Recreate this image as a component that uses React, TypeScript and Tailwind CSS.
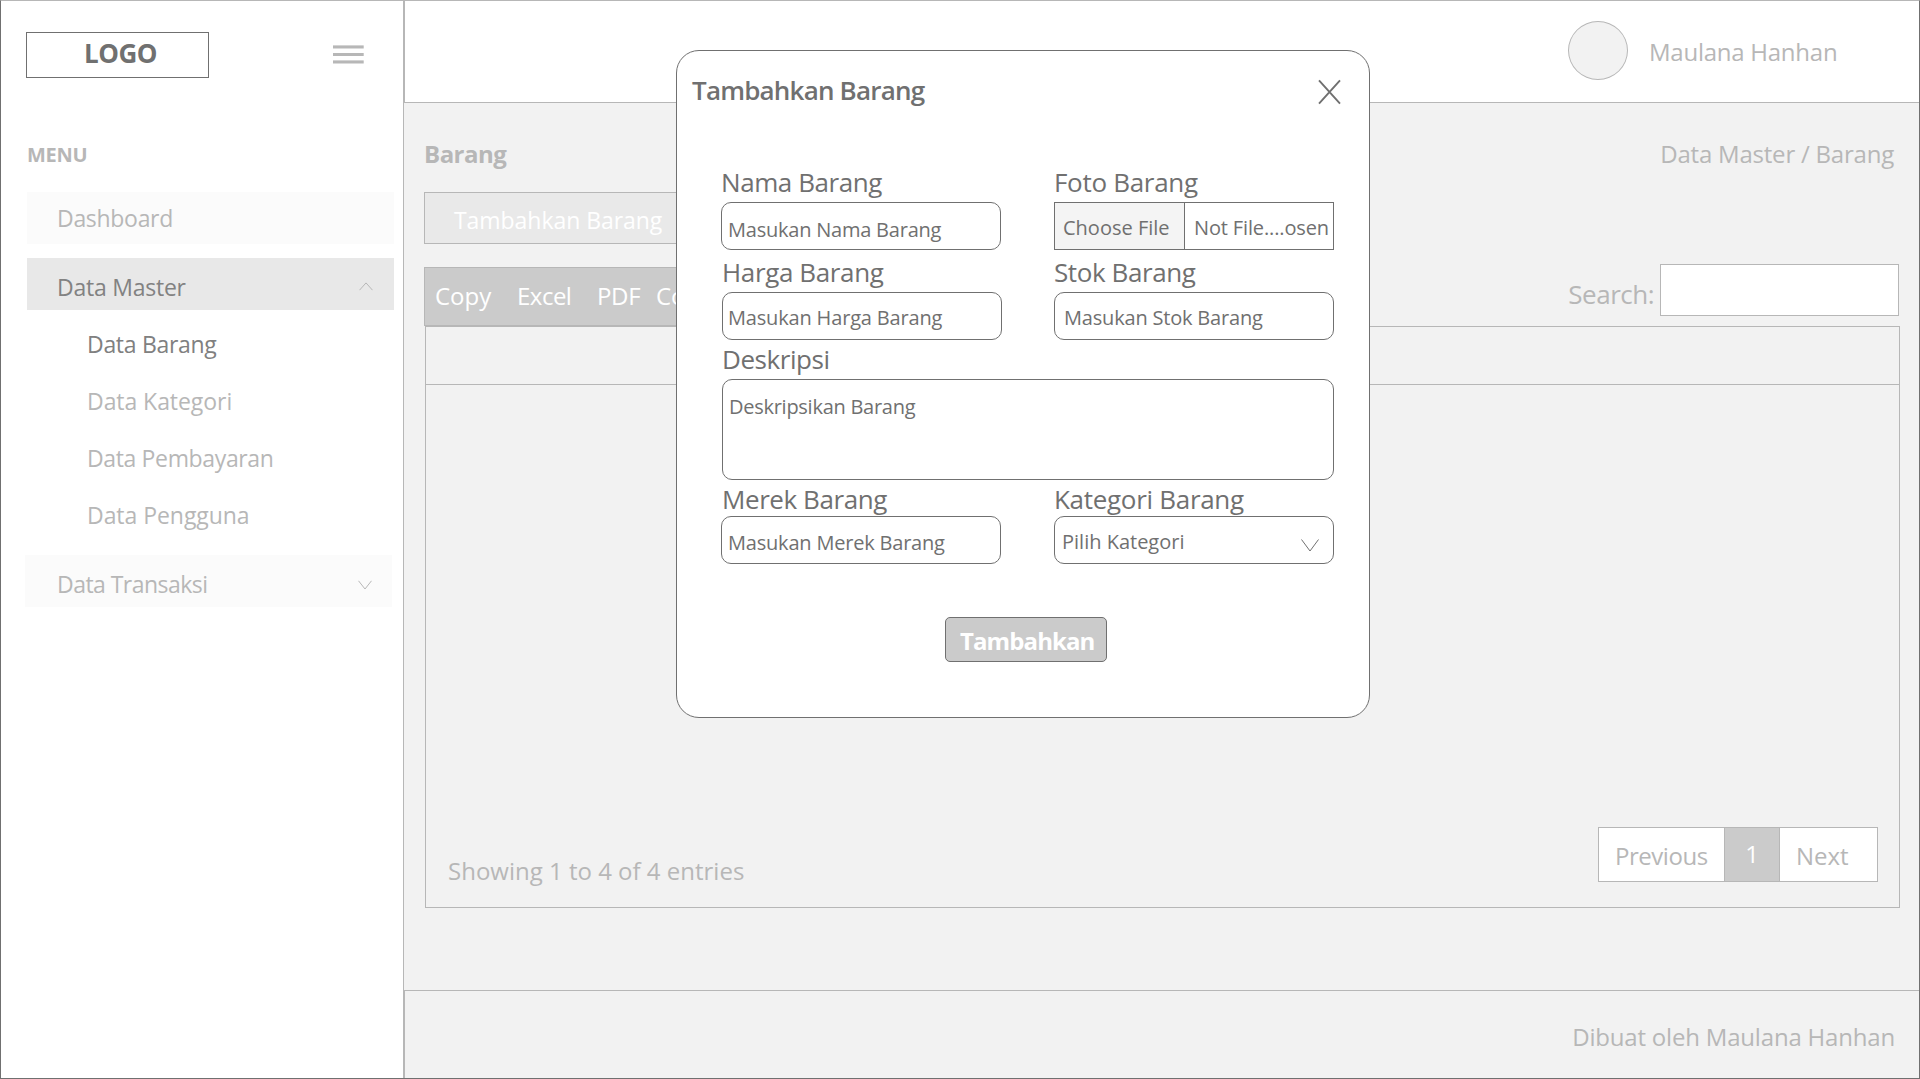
import React from "react";

function Chevron({ className, d, w, h, stroke }: { className?: string; d: string; w: number; h: number; stroke: string }) {
  return (
    <svg className={className} width={w} height={h} viewBox={`0 0 ${w} ${h}`} fill="none" stroke={stroke} strokeWidth="1">
      <path d={d} />
    </svg>
  );
}

function Sidebar() {
  return (
    <aside className="flex h-full w-[403px] shrink-0 flex-col border-r border-[#b7b7b7] bg-white text-[23px] leading-8 text-[#b7b7b7]">
      <div className="flex pt-[31px] pl-[25px]">
        <div className="h-[46px] w-[183px] border border-[#707070] pt-[2px] pl-[57px] text-[26px] leading-9 font-bold tracking-[-0.5px] text-[#707070]">LOGO</div>
        <svg className="mt-[12px] ml-[124px]" width="31" height="21" viewBox="0 0 31 21" fill="#b7b7b7">
          <rect y="1.4" width="30.7" height="3.1" />
          <rect y="9" width="30.7" height="3" />
          <rect y="16.4" width="30.7" height="3.1" />
        </svg>
      </div>
      <h2 className="mt-[63px] ml-[26px] text-[20px] leading-7 font-bold tracking-[-0.24px]">MENU</h2>
      <nav className="mt-[23px] flex flex-col">
        <div className="ml-[26px] h-[52px] w-[367px] bg-[#fbfbfb] pt-[10px] pl-[30px] tracking-[-0.3px]">Dashboard</div>
        <div className="mt-[14px] ml-[26px] flex h-[52px] w-[367px] justify-between bg-[#e8e8e8] pt-[13px] pr-[21px] pl-[30px] tracking-[-0.24px] text-[#828282]">
          <span>Data Master</span>
          <Chevron className="mt-[11px]" w={14} h={9} d="M.5 8.2 7 .9l6.5 7.3" stroke="#b7b7b7" />
        </div>
        <div className="mt-[18px] ml-[86px] flex flex-col gap-[25px]">
          <span className="tracking-[-0.3px] text-[#808080]">Data Barang</span>
          <span className="tracking-[-0.06px]">Data Kategori</span>
          <span className="tracking-[-0.36px]">Data Pembayaran</span>
          <span className="tracking-[-0.05px]">Data Pengguna</span>
        </div>
        <div className="mt-[24px] ml-[24px] flex h-[52px] w-[367px] justify-between bg-[#fbfbfb] pt-[13px] pr-[20px] pl-[32px]">
          <span className="tracking-[-0.54px]">Data Transaksi</span>
          <Chevron className="mt-[12px]" w={14} h={10} d="M.5 .8 7 9 13.5 .8" stroke="#b7b7b7" />
        </div>
      </nav>
    </aside>
  );
}

function Header() {
  return (
    <header className="flex h-[102px] border-b border-l border-[#b7b7b7] bg-white pt-[20px] pl-[1163px]">
      <div className="h-[59px] w-[60px] rounded-[50%] border border-[#b7b7b7] bg-[#f2f2f2]" />
      <span className="mt-[15px] ml-[21px] text-[24px] leading-8 tracking-[-0.25px]">Maulana Hanhan</span>
    </header>
  );
}

function DataTable() {
  return (
    <section className="ml-[21px] flex h-[582px] w-[1475px] flex-col border border-[#b7b7b7]">
      <div className="h-[58px] border-b border-[#b7b7b7]" />
      <div className="flex flex-1 items-end justify-between pr-[21px] pb-[25px] pl-[22px]">
        <span className="mb-[-5px] text-[24px] leading-8">Showing 1 to 4 of 4 entries</span>
        <div className="flex h-[55px] w-[280px] border border-[#b7b7b7] bg-white text-[24px] leading-8">
          <span className="w-[125px] pt-[12px] pl-[16px] tracking-[-0.46px]">Previous</span>
          <span className="w-[56px] border-x border-[#b7b7b7] bg-[#cbcbcb] pt-[10px] text-center text-white">1</span>
          <span className="pt-[12px] pl-[16px]">Next</span>
        </div>
      </div>
    </section>
  );
}

function Content() {
  return (
    <main className="flex h-[887px] flex-col text-[#b7b7b7]">
      <div className="flex justify-between pt-[35px] pr-[25px] pl-[20px] text-[24px] leading-8">
        <h1 className="font-bold tracking-[-0.5px]">Barang</h1>
        <span className="tracking-[-0.22px]">Data Master / Barang</span>
      </div>
      <div className="flex justify-between pr-[20px] pl-[20px]">
        <div className="mt-[22px]">
          <button className="block h-[52px] w-[264px] border border-[#b7b7b7] bg-[#e9e9e9] pt-[3px] pl-[29px] text-left text-[23px] leading-8 tracking-[-0.05px] text-white">Tambahkan Barang</button>
          <div className="mt-[23px] flex h-[59px] w-[450px] border border-[#b7b7b7] bg-[#cbcbcb] pt-[12px] pl-[10px] text-[24px] leading-8 text-white">
            <span className="w-[82px] shrink-0">Copy</span>
            <span className="w-[80px] shrink-0 tracking-[-0.5px]">Excel</span>
            <span className="w-[59px] shrink-0 tracking-[-0.33px]">PDF</span>
            <span className="shrink-0 whitespace-nowrap">Column</span>
          </div>
        </div>
        <label className="mt-[94px] flex">
          <span className="mt-[12px] mr-[6px] text-[26px] leading-9 tracking-[-0.5px]">Search:</span>
          <div className="h-[52px] w-[239px] border border-[#b7b7b7] bg-white" />
        </label>
      </div>
      <DataTable />
    </main>
  );
}

function Label({ children, className }: { children: React.ReactNode; className: string }) {
  return <span className={`block text-[26px] leading-9 ${className}`}>{children}</span>;
}

function Modal() {
  return (
    <div className="absolute top-[49px] left-[675px] flex h-[668px] w-[694px] flex-col rounded-[23px] border border-[#707070] bg-white text-[#707070]">
      <div className="flex justify-between pt-[21px] pr-[28px] pl-[15px]">
        <h2 className="text-[26px] leading-9 font-semibold tracking-[-0.8px]">Tambahkan Barang</h2>
        <svg className="mt-[7px]" width="23" height="26" viewBox="0 0 23 26" fill="none" stroke="#707070" strokeWidth="1.9">
          <path d="M1 1.3 22 24.7M22 1.3 1 24.7" />
        </svg>
      </div>
      <div className="mt-[56px] flex pl-[44px]">
        <div className="w-[333px]">
          <Label className="tracking-[-0.43px]">Nama Barang</Label>
          <div className="mt-[2px] h-[48px] w-[280px] rounded-[10px] border border-[#707070] pt-[13px] pl-[6px] text-[20px] leading-7 tracking-[-0.22px]">Masukan Nama Barang</div>
          <Label className="mt-[4px] ml-px tracking-[-0.37px]">Harga Barang</Label>
          <div className="mt-[2px] ml-px h-[48px] w-[280px] rounded-[10px] border border-[#707070] pt-[11px] pl-[5px] text-[20px] leading-7 tracking-[-0.17px]">Masukan Harga Barang</div>
        </div>
        <div>
          <Label className="tracking-[-0.3px]">Foto Barang</Label>
          <div className="mt-[2px] flex h-[48px] w-[280px] border border-[#707070] text-[20px] leading-7">
            <span className="w-[130px] border-r border-[#707070] bg-[#f4f4f4] pt-[11px] pl-[8px]">Choose File</span>
            <span className="pt-[11px] pl-[9px] tracking-[-0.14px]">Not File....osen</span>
          </div>
          <Label className="mt-[4px] tracking-[-0.41px]">Stok Barang</Label>
          <div className="mt-[2px] h-[48px] w-[280px] rounded-[10px] border border-[#707070] pt-[11px] pl-[9px] text-[20px] leading-7 tracking-[-0.19px]">Masukan Stok Barang</div>
        </div>
      </div>
      <Label className="mt-px ml-[45px] tracking-[-0.45px]">Deskripsi</Label>
      <div className="mt-[2px] ml-[45px] h-[101px] w-[612px] rounded-[10px] border border-[#707070] pt-[13px] pl-[6px] text-[20px] leading-7 tracking-[-0.27px]">Deskripsikan Barang</div>
      <div className="mt-px flex pl-[44px]">
        <div className="w-[333px]">
          <Label className="ml-px tracking-[-0.42px]">Merek Barang</Label>
          <div className="mt-[-1px] h-[48px] w-[280px] rounded-[10px] border border-[#707070] pt-[12px] pl-[6px] text-[20px] leading-7 tracking-[-0.2px]">Masukan Merek Barang</div>
        </div>
        <div>
          <Label className="tracking-[-0.3px]">Kategori Barang</Label>
          <div className="mt-[-1px] flex h-[48px] w-[280px] justify-between rounded-[10px] border border-[#707070] pt-[11px] pr-[14px] pl-[7px] text-[20px] leading-7">
            <span>Pilih Kategori</span>
            <Chevron className="mt-[11px]" w={18} h={13} d="M.5 .5 9 12 17.5 .5" stroke="#707070" />
          </div>
        </div>
      </div>
      <button className="mt-[53px] ml-[268px] h-[45px] w-[162px] rounded-[5px] border border-[#707070] bg-[#cbcbcb] pt-[2px] pl-[14px] text-left text-[24px] leading-8 font-bold tracking-[-0.9px] text-white">Tambahkan</button>
    </div>
  );
}

export default function App() {
  return (
    <div className="relative flex h-[1079px] w-[1920px] overflow-hidden border border-[#707070] border-t-[#b7b7b7] bg-white font-['Open_Sans',sans-serif] text-[#b7b7b7]">
      <Sidebar />
      <div className="flex min-w-0 flex-1 flex-col bg-[#f2f2f2]">
        <Header />
        <Content />
        <footer className="flex-1 border-t border-l border-[#b7b7b7] pt-[30px] pr-[24px] text-right text-[24px] leading-8 tracking-[-0.19px]">Dibuat oleh Maulana Hanhan</footer>
      </div>
      <Modal />
    </div>
  );
}
